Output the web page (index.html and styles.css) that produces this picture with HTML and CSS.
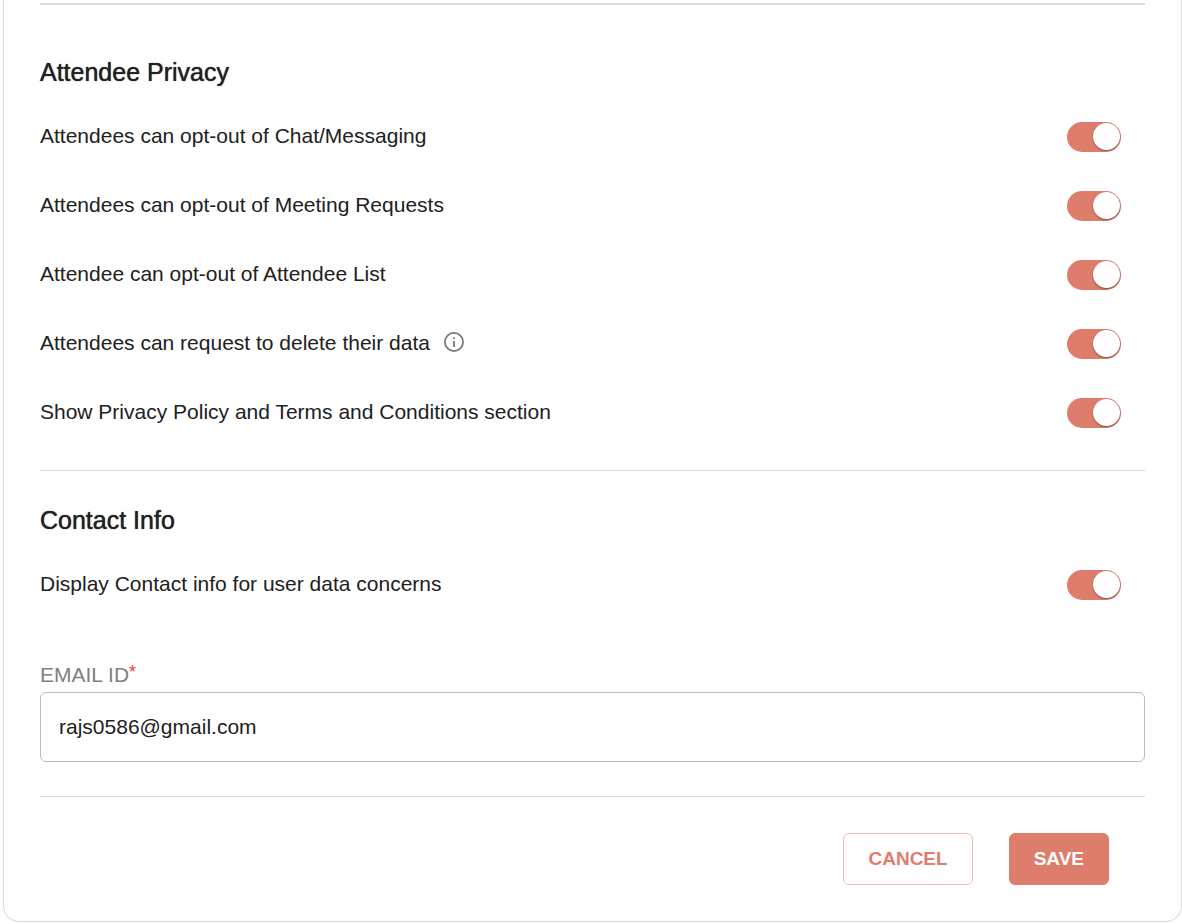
FILE: index.html
```
<!DOCTYPE html>
<html lang="en">

<head>
  <title>Privacy Settings</title>
  <meta charset="utf-8" />
  <meta name="viewport" content="width=device-width, initial-scale=1.0">
  <link rel="stylesheet" href="styles.css">
</head>

<body>
  <form class="card">
    <section class="section privacy">
      <h2>Attendee Privacy</h2>
      <div class="row">
        <label for="chat">Attendees can opt-out of Chat/Messaging</label>
        <input class="switch" type="checkbox" role="switch" id="chat" checked>
      </div>
      <div class="row">
        <label for="meeting">Attendees can opt-out of Meeting Requests</label>
        <input class="switch" type="checkbox" role="switch" id="meeting" checked>
      </div>
      <div class="row">
        <label for="list">Attendee can opt-out of Attendee List</label>
        <input class="switch" type="checkbox" role="switch" id="list" checked>
      </div>
      <div class="row">
        <label for="delete">Attendees can request to delete their data</label>
        <svg class="info" viewBox="0 0 20 20" aria-hidden="true">
          <circle cx="10" cy="10" r="9.1" fill="none" stroke="currentColor" stroke-width="1.7" />
          <path d="M9.1 5.2h1.8v1.9H9.1zM9.1 9h1.8v6H9.1z" fill="currentColor" />
        </svg>
        <input class="switch" type="checkbox" role="switch" id="delete" checked>
      </div>
      <div class="row">
        <label for="policy">Show Privacy Policy and Terms and Conditions section</label>
        <input class="switch" type="checkbox" role="switch" id="policy" checked>
      </div>
    </section>
    <section class="section contact">
      <h2>Contact Info</h2>
      <div class="row">
        <label for="contact">Display Contact info for user data concerns</label>
        <input class="switch" type="checkbox" role="switch" id="contact" checked>
      </div>
      <div class="field">
        <label for="email">EMAIL ID<span class="required">*</span></label>
        <input type="email" id="email" value="rajs0586@gmail.com" required>
      </div>
    </section>
    <div class="actions">
      <button class="button" type="button">CANCEL</button>
      <button class="button primary" type="submit">SAVE</button>
    </div>
  </form>
</body>

</html>
```
FILE: styles.css
```
* {
  box-sizing: border-box;
}

body {
  margin: 0;
  background-color: white;
  color: #212121;
  font: 21px/28px "Liberation Sans", Arial, sans-serif;
}

.card {
  margin-left: 3px;
  padding: 3px 36px 36px;
  border: 1px solid #dadada;
  border-top: none;
  border-radius: 0 0 16px 16px;
}

.section {
  border-top: 1px solid #dadada;
}

.privacy {
  padding: 49px 0 23px;
  border-top-width: 2px;
}

.contact {
  padding: 31px 0 34px;
}

h2 {
  margin: 0 0 12px;
  font-size: 25px;
  font-weight: 500;
  line-height: 36px;
  /* medium weight */
  text-shadow: 0 0 1px #212121;
}

.row {
  display: flex;
  align-items: center;
  padding-right: 24px;
  height: 69px;
}

.row label {
  padding-bottom: 2px;
}

.info {
  width: 20px;
  height: 20px;
  margin: 0 0 4px 14px;
  color: #757575;
}

.switch {
  appearance: none;
  display: flex;
  align-items: center;
  width: 54px;
  height: 30px;
  margin: 0 0 0 auto;
  padding: 0 1px;
  border-radius: 15px;
  background-color: #ccc;
  cursor: pointer;
}

.switch::before {
  content: "";
  width: 27px;
  height: 27px;
  border-radius: 50%;
  background-color: white;
  box-shadow: 0 1px 2px rgba(0, 0, 0, 0.4);
}

.switch:checked {
  justify-content: flex-end;
  background-color: #df7d6c;
}

.field {
  display: flex;
  flex-direction: column;
  margin-top: 41px;
}

.field label {
  padding-bottom: 2px;
  line-height: 30px;
  color: #808080;
}

.required {
  color: #f03a2e;
  font-size: 18px;
  line-height: 24px;
  vertical-align: top;
}

.field input {
  width: 100%;
  height: 70px;
  padding: 0 18px;
  border: 1px solid #bdbdbd;
  border-radius: 6px;
  background-color: white;
  color: inherit;
  font: inherit;
}

.actions {
  display: flex;
  justify-content: flex-end;
  gap: 36px;
  padding: 36px 36px 0 0;
  border-top: 1px solid #dadada;
}

.button {
  height: 52px;
  padding: 0 24px;
  border: 1px solid #f2bcb2;
  border-radius: 6px;
  background-color: white;
  color: #df7d6c;
  font: bold 19px "Liberation Sans", Arial, sans-serif;
  cursor: pointer;
}

.primary {
  border-color: #df7d6c;
  background-color: #df7d6c;
  color: white;
}
```
